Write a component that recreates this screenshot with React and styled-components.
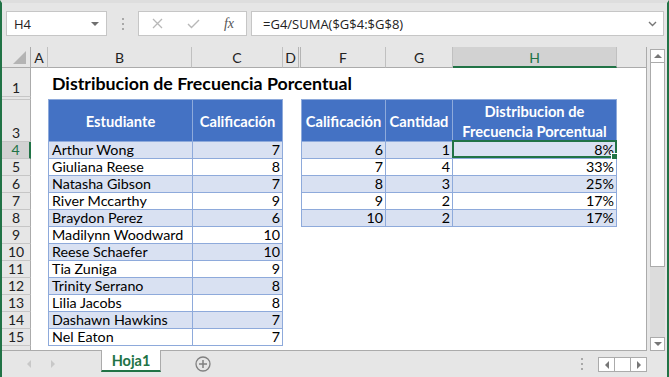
import React from 'react'
import styled, { createGlobalStyle } from 'styled-components'

const GREEN = '#217346'
const LINE = '#ababab'
const TABLE_LINE = '#8eaadb'

const GlobalStyle = createGlobalStyle`
  html, body {
    margin: 0;
    padding: 0;
    background: #e6e6e6;
  }
  body {
    font-family: 'Lato', 'Liberation Sans', sans-serif;
  }
`

const Window = styled.div`
  width: 669px;
  height: 377px;
  box-sizing: border-box;
  border-left: 2px solid ${GREEN};
  border-right: 2px solid ${GREEN};
  border-top: 3px solid #dedede;
  background: #e6e6e6;
  display: flex;
  flex-direction: column;
  overflow: hidden;
`

/* ---------- formula bar ---------- */

const FormulaBar = styled.div`
  height: 44px;
  box-sizing: border-box;
  padding: 8px 3px 0 4px;
  display: flex;
  align-items: flex-start;
  font-family: 'Open Sans', 'Noto Sans', sans-serif;
  font-size: 13px;
  color: #222;
`

const Box = styled.div`
  height: 25px;
  box-sizing: border-box;
  background: #fff;
  border: 1px solid #c6c6c6;
  display: flex;
  align-items: center;
`

const NameBox = styled(Box)`
  width: 101px;
  padding: 0 7px 0 7px;
  justify-content: space-between;
`

const Grip = styled.div`
  width: 31px;
  height: 25px;
  display: flex;
  flex-direction: column;
  align-items: center;
  justify-content: center;
  gap: 3px;

  span {
    width: 2px;
    height: 2px;
    background: #a8a8a8;
  }
`

const ButtonGroup = styled(Box)`
  width: 109px;
  padding: 0 10px 0 13px;
  justify-content: space-between;
`

const Fx = styled.span`
  font-family: 'Liberation Serif', serif;
  font-style: italic;
  font-size: 14px;
  color: #555;
  margin-right: 2px;
`

const FormulaInput = styled(Box)`
  flex: 1;
  margin-left: 4px;
  padding: 0 6px 0 11px;
  justify-content: space-between;
`

/* ---------- sheet ---------- */

const Main = styled.div`
  height: 304px;
  display: flex;
  align-items: stretch;
`

const Sheet = styled.div`
  width: 645px;
  box-sizing: border-box;
  border-right: 1px solid ${LINE};
  border-bottom: 1px solid ${LINE};
  background: #fff;
  display: grid;
  grid-template-columns: 29px 17px 144px 91px 18px 85px 67px 164px 1fr;
  grid-template-rows: 21px 29px 3px 42px repeat(12, 17px) 1fr;
`

const Corner = styled.div`
  grid-row: 1;
  grid-column: 1;
  background: #e6e6e6;
  border-right: 1px solid ${LINE};
  border-bottom: 1px solid ${LINE};
  display: flex;
  align-items: flex-end;
  justify-content: flex-end;
  padding: 0 4px 3px 0;
`

const ColHeader = styled.div`
  grid-row: 1;
  background: ${p => (p.$active ? '#d2d2d2' : '#e6e6e6')};
  color: ${p => (p.$active ? GREEN : '#222')};
  border-right: ${p => (p.$hidden ? '3px double #b4b4b4' : '1px solid #c0c0c0')};
  border-bottom: ${p => (p.$active ? `2px solid ${GREEN}` : `1px solid ${LINE}`)};
  display: flex;
  align-items: center;
  justify-content: center;
  font-size: 14px;
  padding-top: 1px;
`

const HeaderFill = styled.div`
  grid-row: 1;
  grid-column: 9;
  background: #e6e6e6;
  border-bottom: 1px solid ${LINE};
`

const RowHeader = styled.div`
  grid-column: 1;
  grid-row: ${p => p.$row};
  box-sizing: border-box;
  background: ${p => (p.$active ? '#d2d2d2' : '#e6e6e6')};
  color: ${p => (p.$active ? GREEN : '#222')};
  border-bottom: ${p => (p.$last ? 'none' : '1px solid #c6c6c6')};
  border-right: ${p => (p.$active ? `2px solid ${GREEN}` : `1px solid ${LINE}`)};
  display: flex;
  align-items: flex-end;
  justify-content: center;
  font-size: 14px;
  line-height: 16px;
`

const Title = styled.div`
  grid-row: 2;
  grid-column: 3 / 9;
  align-self: end;
  padding: 0 0 3px 4px;
  font-size: 17.8px;
  font-weight: 700;
  color: #000;
  white-space: nowrap;
`

const Table = styled.div`
  grid-row: ${p => p.$rows};
  grid-column: ${p => p.$cols};
  align-self: start;
  margin-top: -1px;
  display: grid;
  grid-template-columns: ${p => p.$template};
  border-left: 1px solid ${TABLE_LINE};
  border-top: 1px solid ${TABLE_LINE};
`

const HeadCell = styled.div`
  height: 42px;
  box-sizing: border-box;
  background: #4472c4;
  color: #fff;
  font-weight: 700;
  font-size: 14.7px;
  line-height: 20px;
  text-align: center;
  display: flex;
  align-items: center;
  justify-content: center;
  padding-top: 1px;
  border-right: 1px solid ${TABLE_LINE};
  border-bottom: 1px solid ${TABLE_LINE};
  white-space: nowrap;
`

const Cell = styled.div`
  position: relative;
  height: 17px;
  box-sizing: border-box;
  background: ${p => (p.$band ? '#d9e1f2' : '#fff')};
  border-right: 1px solid ${TABLE_LINE};
  border-bottom: 1px solid ${TABLE_LINE};
  padding: 0 2px 0 3px;
  font-size: 14.3px;
  line-height: 16px;
  color: #000;
  text-align: ${p => (p.$num ? 'right' : 'left')};
  white-space: nowrap;
`

const Selection = styled.div`
  position: absolute;
  top: -2px;
  left: -1px;
  right: -1px;
  bottom: 0;
  border: 2px solid ${GREEN};
  pointer-events: none;
`

const Handle = styled.div`
  position: absolute;
  right: -3px;
  bottom: -4px;
  width: 5px;
  height: 5px;
  background: ${GREEN};
  border: 1px solid #fff;
`

/* ---------- scrollbars ---------- */

const VScroll = styled.div`
  width: 15px;
  margin-left: 3px;
  padding-top: 2px;
  display: flex;
  flex-direction: column;
`

const ScrollButton = styled.div`
  height: 14px;
  box-sizing: border-box;
  background: #fff;
  border: 1px solid ${LINE};
  display: flex;
  align-items: center;
  justify-content: center;
`

const Thumb = styled.div`
  height: 204px;
  box-sizing: border-box;
  background: #fff;
  border: 1px solid ${LINE};
  border-top: none;
`

const Track = styled.div`
  flex: 1;
  background: #dcdcdc;
`

/* ---------- sheet tabs ---------- */

const TabBar = styled.div`
  flex: 1;
  display: flex;
  align-items: flex-start;
`

const TabNav = styled.div`
  width: 99px;
  height: 25px;
  display: flex;
  align-items: center;
  padding-left: 25px;
  box-sizing: border-box;
  gap: 20px;
`

const Tab = styled.div`
  width: 60px;
  height: 22px;
  box-sizing: border-box;
  margin-top: -1px;
  background: #fff;
  border-left: 1px solid ${LINE};
  border-right: 1px solid ${LINE};
  border-bottom: 2px solid ${GREEN};
  color: ${GREEN};
  font-weight: 700;
  font-size: 14.5px;
  display: flex;
  align-items: center;
  justify-content: center;
`

const AddSheet = styled.div`
  margin-left: 34px;
  margin-top: 5px;
  width: 16px;
  height: 16px;
`

const Spacer = styled.div`
  flex: 1;
`

const Dots = styled(Grip)`
  width: 6px;
  height: 26px;
  margin-right: 13px;
`

const HScroll = styled.div`
  display: flex;
  margin-top: 6px;
  margin-right: 20px;
  height: 15px;
  box-sizing: border-box;
  border: 1px solid ${LINE};
  background: #fff;
`

const HSeg = styled.div`
  width: 15px;
  display: flex;
  align-items: center;
  justify-content: center;
  border-left: ${p => (p.$first ? 'none' : `1px solid ${LINE}`)};
`

const students = [
  ['Arthur Wong', 7],
  ['Giuliana Reese', 8],
  ['Natasha Gibson', 7],
  ['River Mccarthy', 9],
  ['Braydon Perez', 6],
  ['Madilynn Woodward', 10],
  ['Reese Schaefer', 10],
  ['Tia Zuniga', 9],
  ['Trinity Serrano', 8],
  ['Lilia Jacobs', 8],
  ['Dashawn Hawkins', 7],
  ['Nel Eaton', 7]
]

const frequencies = [
  [6, 1, '8%'],
  [7, 4, '33%'],
  [8, 3, '25%'],
  [9, 2, '17%'],
  [10, 2, '17%']
]

const columns = [
  { name: 'A', col: 2 },
  { name: 'B', col: 3 },
  { name: 'C', col: 4 },
  { name: 'D', col: 5, hidden: true },
  { name: 'F', col: 6 },
  { name: 'G', col: 7 },
  { name: 'H', col: 8, active: true }
]

const Arrow = ({ dir = 'up', color = '#777' }) => {
  const points = {
    up: '0,4 4,0 8,4',
    down: '0,0 8,0 4,4',
    left: '4,0 4,8 0,4',
    right: '0,0 0,8 4,4'
  }[dir]
  const size = dir === 'up' || dir === 'down' ? [8, 4] : [4, 8]
  return (
    <svg width={size[0]} height={size[1]} viewBox={`0 0 ${size[0]} ${size[1]}`}>
      <polygon points={points} fill={color} />
    </svg>
  )
}

export default function App () {
  return (
    <>
      <GlobalStyle />
      <Window>
        <FormulaBar>
          <NameBox>
            <span>H4</span>
            <Arrow dir="down" color="#6f6f6f" />
          </NameBox>
          <Grip><span /><span /><span /></Grip>
          <ButtonGroup>
            <svg width="11" height="11" viewBox="0 0 11 11">
              <path d="M1 1 L10 10 M10 1 L1 10" stroke="#b8b8b8" strokeWidth="1.3" fill="none" />
            </svg>
            <svg width="13" height="10" viewBox="0 0 13 10">
              <path d="M1 5 L4.5 8.5 L12 1" stroke="#b8b8b8" strokeWidth="1.4" fill="none" />
            </svg>
            <Fx>fx</Fx>
          </ButtonGroup>
          <FormulaInput>
            <span>=G4/SUMA($G$4:$G$8)</span>
            <svg width="9" height="6" viewBox="0 0 9 6">
              <path d="M1 1 L4.5 4.5 L8 1" stroke="#777" strokeWidth="1.4" fill="none" />
            </svg>
          </FormulaInput>
        </FormulaBar>

        <Main>
          <Sheet>
            <Corner>
              <svg width="13" height="13" viewBox="0 0 13 13">
                <polygon points="13,0 13,13 0,13" fill="#b4b4b4" />
              </svg>
            </Corner>
            {columns.map(c => (
              <ColHeader key={c.name} style={{ gridColumn: c.col }} $active={c.active} $hidden={c.hidden}>
                {c.name}
              </ColHeader>
            ))}
            <HeaderFill />

            {Array.from({ length: 15 }, (_, i) => (
              <RowHeader key={i} $row={i + 2} $active={i + 1 === 4}>
                {i + 1 === 2 ? '' : i + 1}
              </RowHeader>
            ))}
            <RowHeader $row={17} $last />

            <Title>Distribucion de Frecuencia Porcentual</Title>

            <Table $rows="4 / 17" $cols="3 / 5" $template="144px 90px">
              <HeadCell>Estudiante</HeadCell>
              <HeadCell>Calificación</HeadCell>
              {students.map(([name, grade], i) => (
                <React.Fragment key={name}>
                  <Cell $band={i % 2 === 0}>{name}</Cell>
                  <Cell $band={i % 2 === 0} $num>{grade}</Cell>
                </React.Fragment>
              ))}
            </Table>

            <Table $rows="4 / 10" $cols="6 / 9" $template="84px 67px 164px">
              <HeadCell>Calificación</HeadCell>
              <HeadCell>Cantidad</HeadCell>
              <HeadCell>Distribucion de<br />Frecuencia Porcentual</HeadCell>
              {frequencies.map(([grade, count, pct], i) => (
                <React.Fragment key={grade}>
                  <Cell $band={i % 2 === 0} $num>{grade}</Cell>
                  <Cell $band={i % 2 === 0} $num>{count}</Cell>
                  <Cell $band={i % 2 === 0} $num>
                    {pct}
                    {i === 0 && (
                      <Selection>
                        <Handle />
                      </Selection>
                    )}
                  </Cell>
                </React.Fragment>
              ))}
            </Table>
          </Sheet>

          <VScroll>
            <ScrollButton><Arrow dir="up" /></ScrollButton>
            <Thumb />
            <Track />
            <ScrollButton><Arrow dir="down" /></ScrollButton>
          </VScroll>
        </Main>

        <TabBar>
          <TabNav>
            <Arrow dir="left" color="#c8c8c8" />
            <Arrow dir="right" color="#c8c8c8" />
          </TabNav>
          <Tab>Hoja1</Tab>
          <AddSheet>
            <svg width="16" height="16" viewBox="0 0 16 16">
              <circle cx="8" cy="8" r="7" stroke="#808080" strokeWidth="1.3" fill="none" />
              <path d="M8 4 V12 M4 8 H12" stroke="#808080" strokeWidth="1.5" />
            </svg>
          </AddSheet>
          <Spacer />
          <Dots><span /><span /><span /></Dots>
          <HScroll>
            <HSeg $first><Arrow dir="left" /></HSeg>
            <HSeg />
            <HSeg><Arrow dir="right" /></HSeg>
          </HScroll>
        </TabBar>
      </Window>
    </>
  )
}
